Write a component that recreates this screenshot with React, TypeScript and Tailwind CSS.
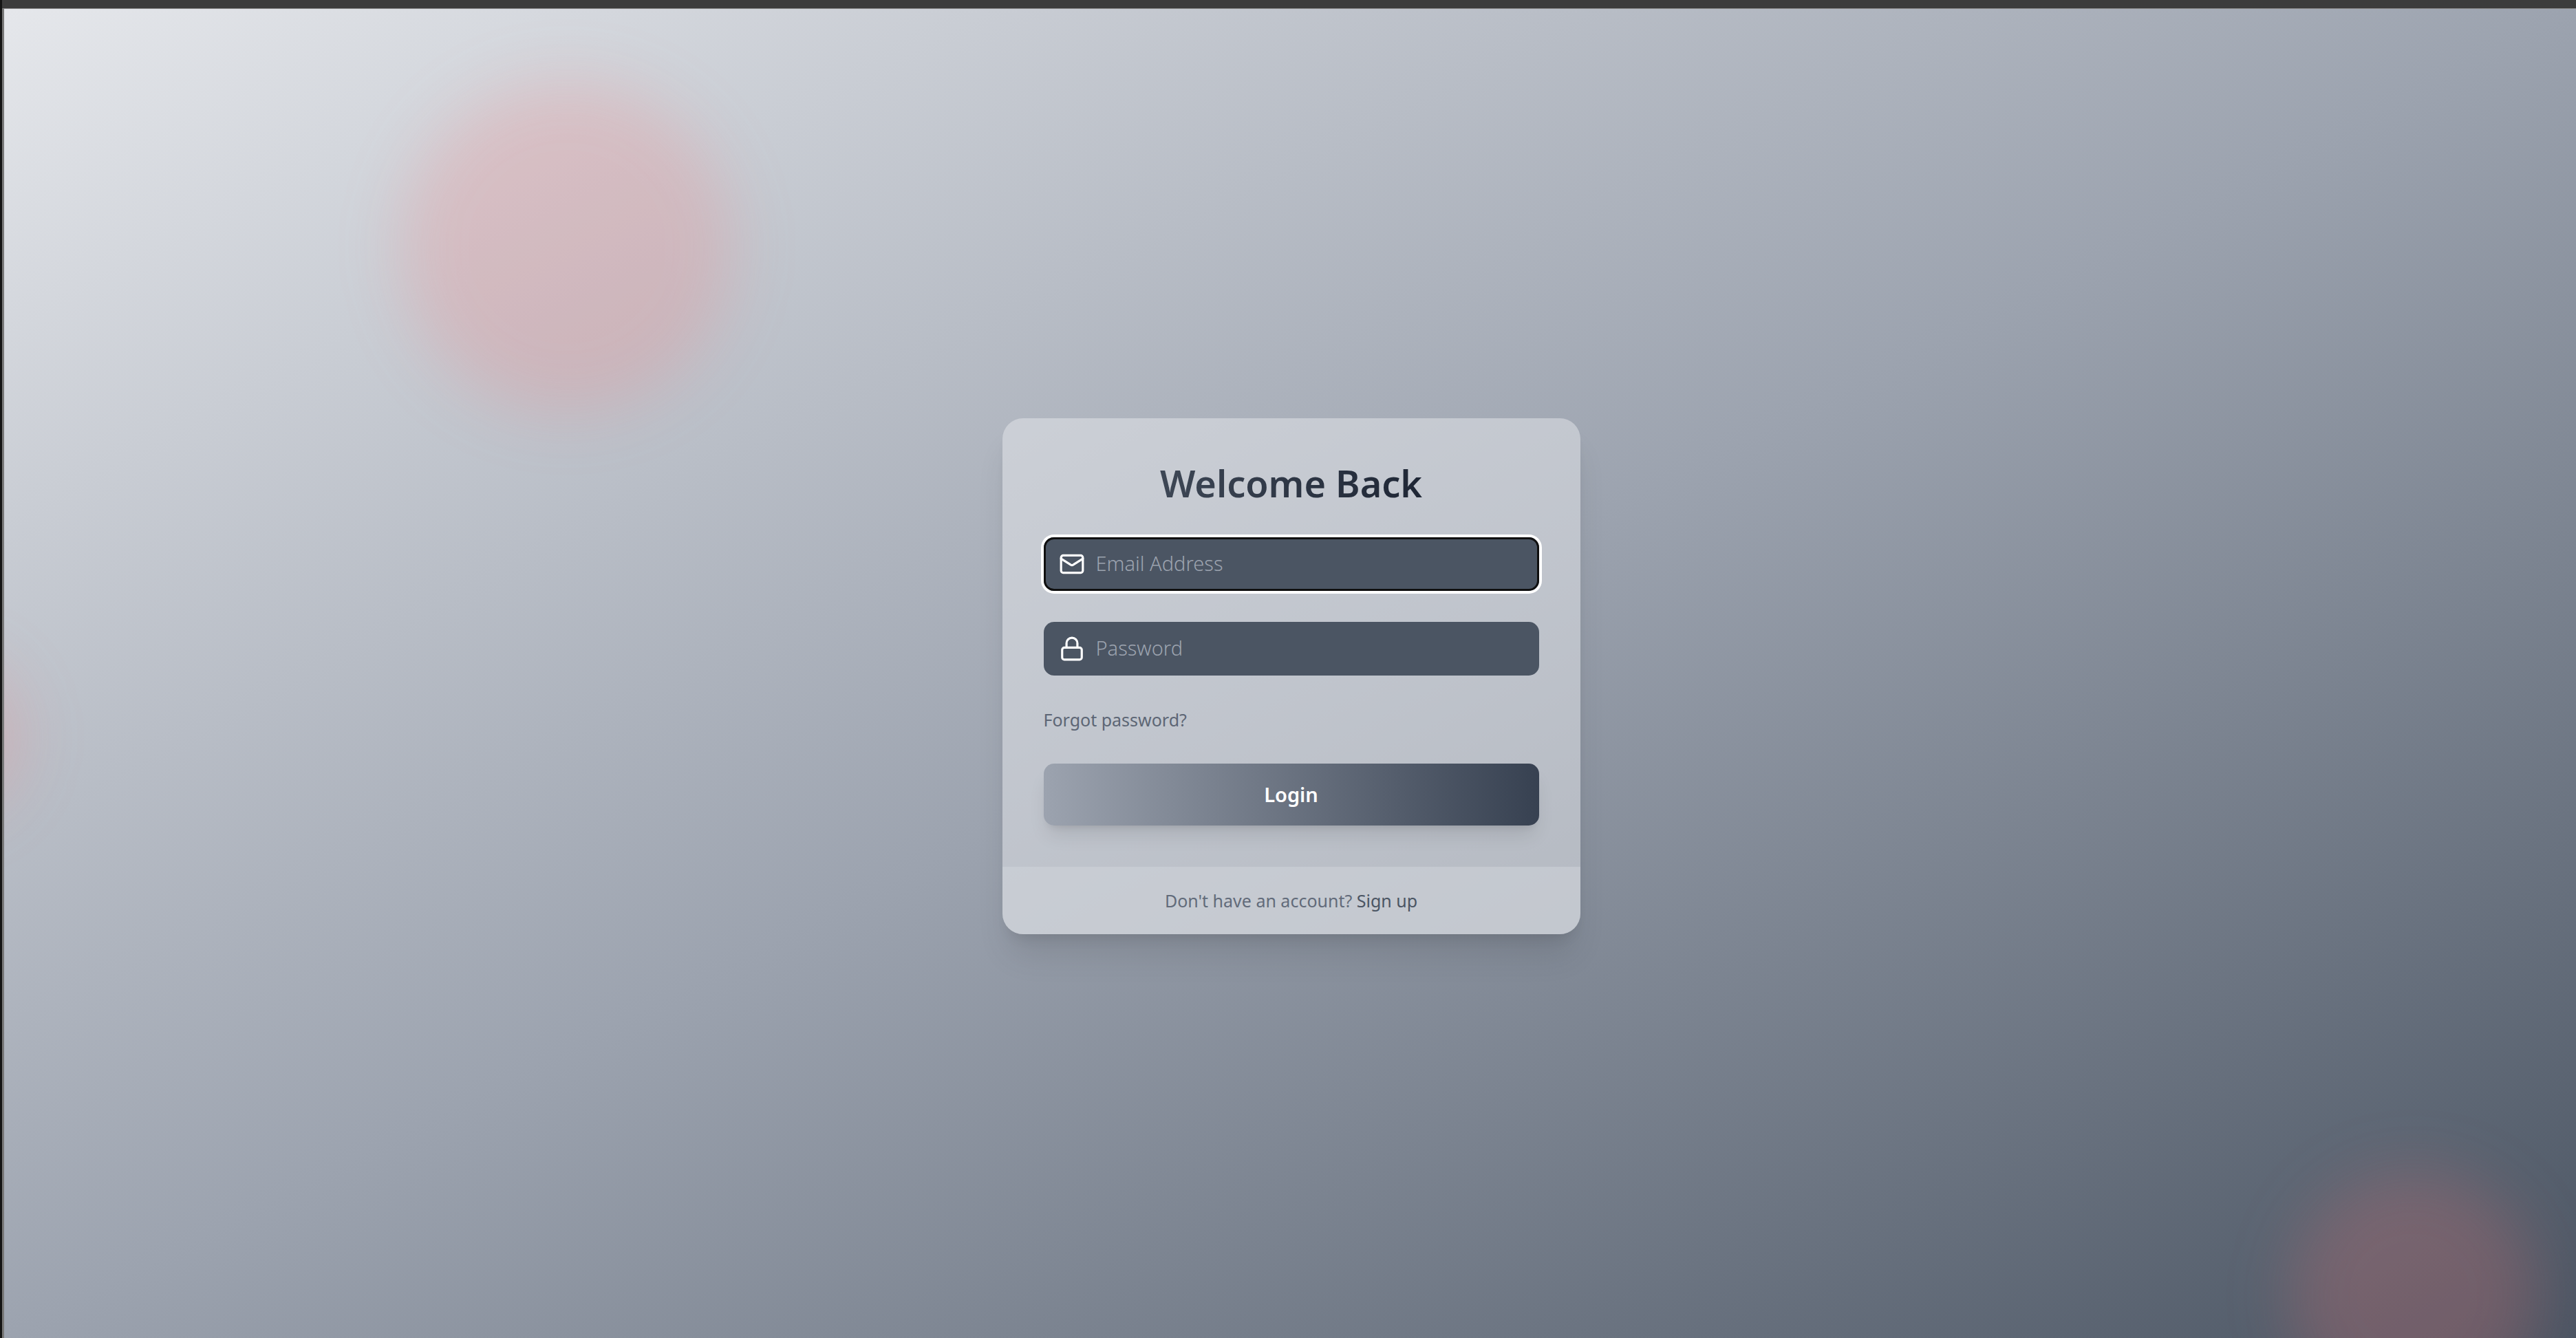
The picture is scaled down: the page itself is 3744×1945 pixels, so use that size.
import { useId } from "react";
import type { ReactNode } from "react";
import { Lock, Mail } from "lucide-react";

type FieldProps = {
  type: string;
  placeholder: string;
  icon: ReactNode;
  active?: boolean;
};

function Field({ type, placeholder, icon, active = false }: FieldProps) {
  const id = useId();
  return (
    <div
      className={
        active
          ? "flex h-[78px] items-center gap-4 rounded-[15px] bg-[#4b5563] px-[22px] ring-[4px] ring-white outline-3 -outline-offset-3 outline-[#101010]"
          : "flex h-[78px] items-center gap-4 rounded-[15px] bg-[#4b5563] px-[22px]"
      }
    >
      <label htmlFor={id} aria-label={placeholder} className="text-white">
        {icon}
      </label>
      <input
        id={id}
        type={type}
        placeholder={placeholder}
        className="min-w-0 flex-1 bg-transparent pb-0.5 text-[29px] leading-[44px] font-light text-white outline-none placeholder:text-[#9ca3af]"
      />
    </div>
  );
}

export default function App() {
  return (
    <div className="relative flex h-screen flex-col overflow-hidden border-l-3 border-[#141414] font-['Noto_Sans',sans-serif]">
      <div className="h-3 shrink-0 bg-[#3c3c3c]" />
      <div className="relative flex flex-1 items-center justify-center overflow-hidden border-t border-l-3 border-t-[#8c8c8c] border-l-[#777777] bg-linear-to-br/srgb from-[#e5e7eb] via-[#9ca3af] to-[#4b5563] pt-2 pl-[3px]">
        <div className="absolute top-[106px] left-[578px] size-[480px] rounded-full bg-[#f87171]/20 blur-[45px]" />
        <div className="absolute top-[1690px] right-[56px] size-[360px] rounded-full bg-[#f87171]/20 blur-[45px]" />
        <div className="absolute top-[938px] -left-[214px] size-[240px] rounded-full bg-[#f87171]/20 blur-[45px]" />

        <main className="relative w-[840px] overflow-hidden rounded-[30px] bg-[#e5e7eb]/50 shadow-[0_38px_47px_-9px_rgba(0,0,0,0.1),0_15px_19px_-11px_rgba(0,0,0,0.1)]">
          <div className="p-[60px]">
            <h1 className="mb-[45px] bg-linear-to-r/srgb from-[#4b5563] to-[#111827] bg-clip-text text-center text-[54px] leading-[68px] font-semibold text-transparent">
              Welcome Back
            </h1>
            <form className="flex flex-col" onSubmit={(e) => e.preventDefault()}>
              <div className="flex flex-col gap-[45px]">
                <Field
                  type="email"
                  placeholder="Email Address"
                  active
                  icon={<Mail size={38} strokeWidth={2} />}
                />
                <Field
                  type="password"
                  placeholder="Password"
                  icon={<Lock size={38} strokeWidth={2} />}
                />
              </div>
              <a href="#forgot" className="mt-11 mb-11 self-start text-[25px] leading-10 text-[#5d6675]">
                Forgot password?
              </a>
              <button
                type="submit"
                className="h-[90px] rounded-[15px] bg-linear-to-r/srgb from-[#9ca3af] to-[#374151] text-[29px] font-semibold text-white shadow-[0_19px_28px_-6px_rgba(0,0,0,0.1),0_8px_11px_-7px_rgba(0,0,0,0.1)]"
              >
                Login
              </button>
            </form>
          </div>
          <p className="bg-[#d1d5db]/50 py-[30px] text-center text-[25px] leading-[38px] text-[#626b7a]">
            Don't have an account?{" "}
            <a href="#signup" className="text-[#4b5563]">
              Sign up
            </a>
          </p>
        </main>
      </div>
      <div className="absolute top-[265px] -left-[3px] h-[70px] w-0.5 rounded-r-full bg-[#8f9192]" />
    </div>
  );
}
